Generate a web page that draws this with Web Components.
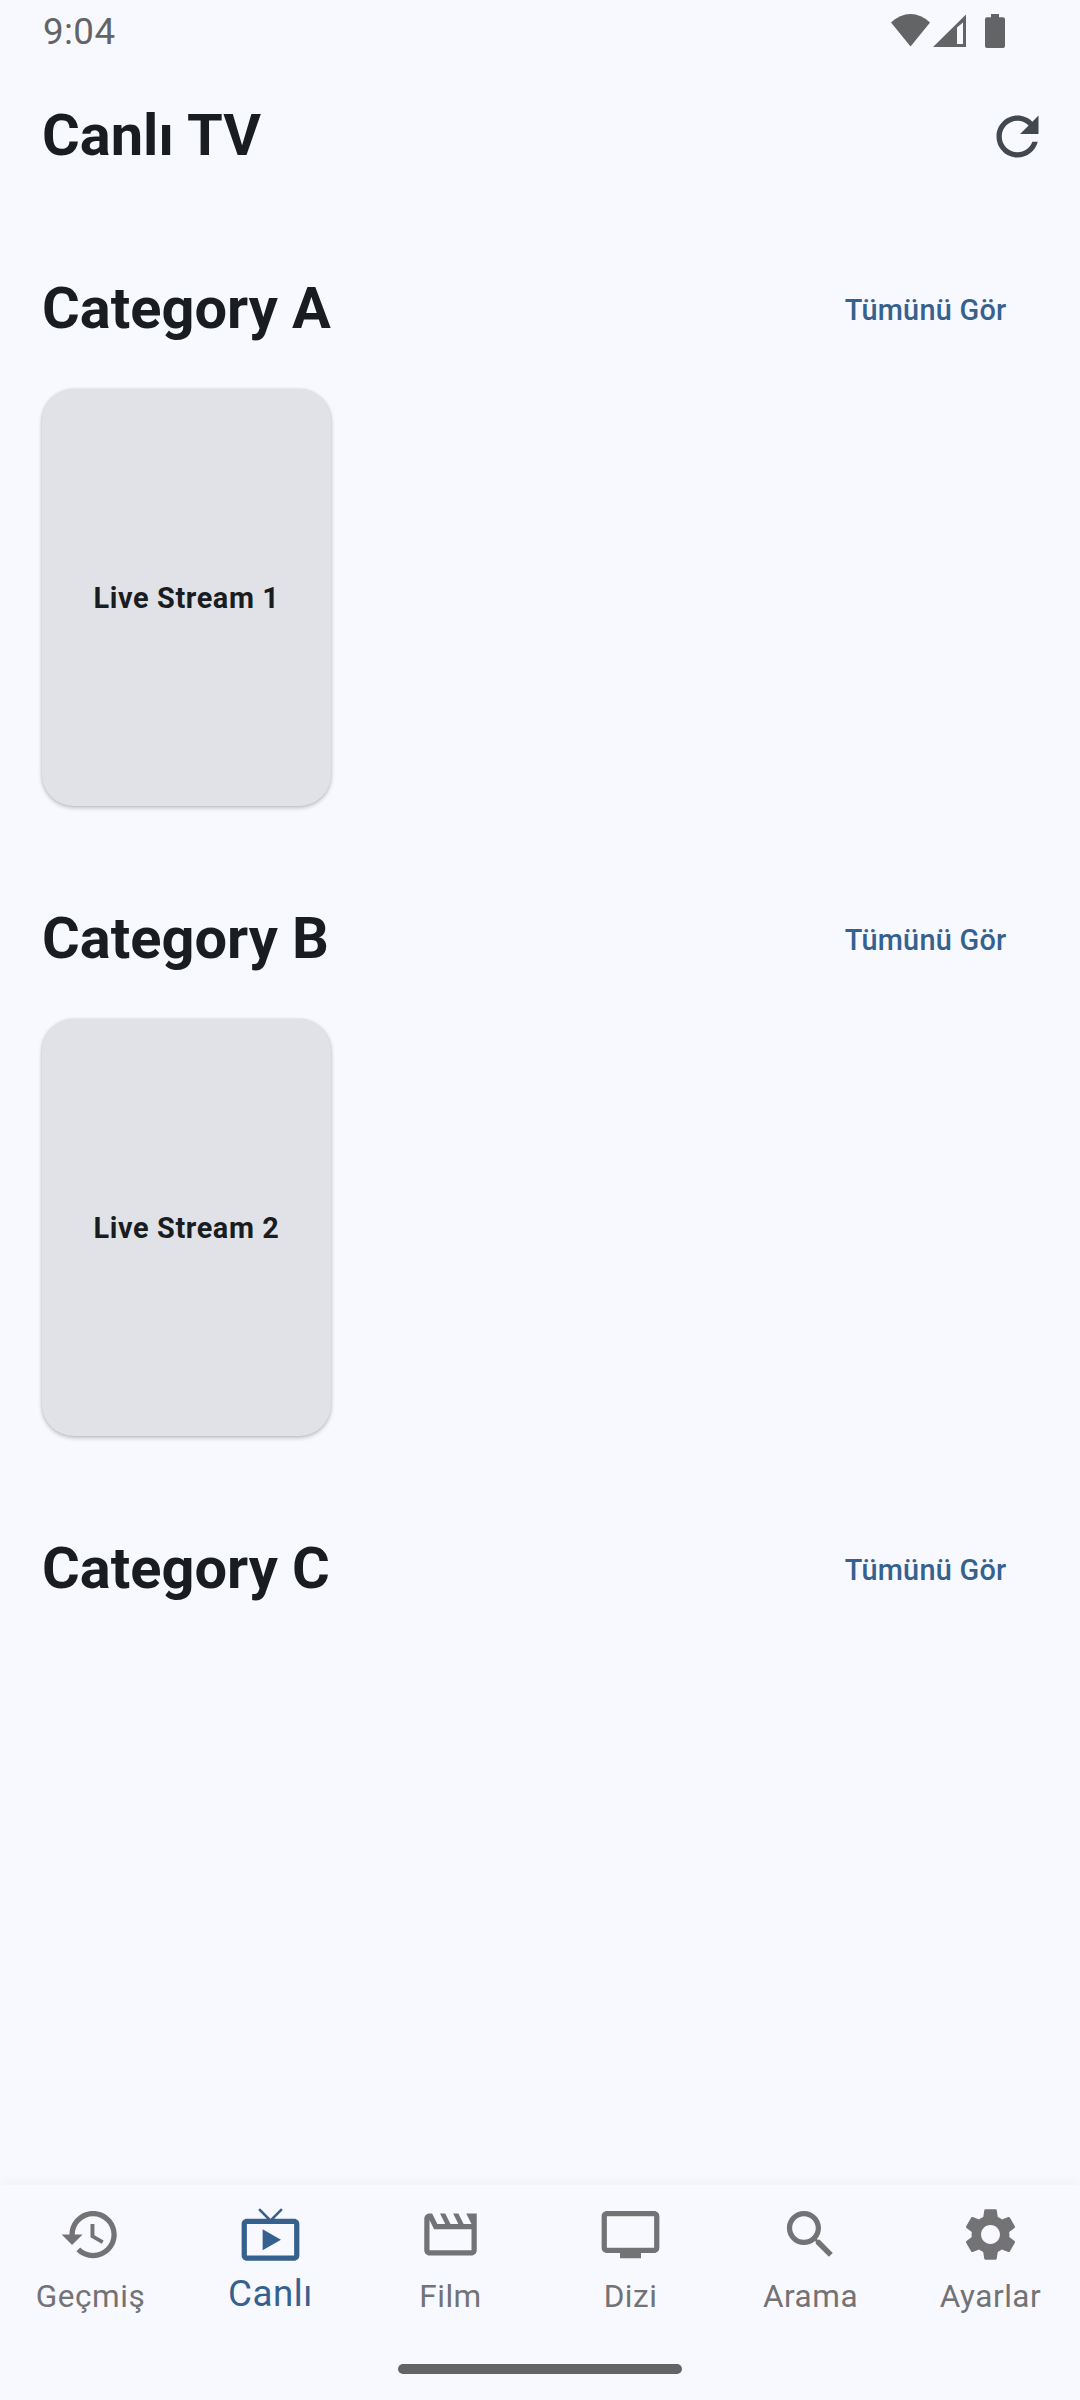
<!DOCTYPE html>
<html lang="tr">
<head>
<meta charset="utf-8">
<title>Canlı TV</title>
<style>
html,body{margin:0;background:#f8f9ff}
body{font-family:Roboto,"Liberation Sans",sans-serif;color:#191c20}
</style>
</head>
<body>
<tv-app></tv-app>
<script>
const define = (name, html, setup) => customElements.define(name, class extends HTMLElement {
  constructor() {
    super();
    this.attachShadow({ mode: "open" });
  }
  connectedCallback() {
    this.shadowRoot.innerHTML = html;
    if (setup) setup(this, this.shadowRoot);
  }
});

const ICONS = {
  refresh: "M17.65 6.35C16.2 4.9 14.21 4 12 4c-4.42 0-7.99 3.58-7.99 8s3.57 8 7.99 8c3.73 0 6.84-2.55 7.73-6h-2.08c-.82 2.33-3.04 4-5.65 4-3.31 0-6-2.69-6-6s2.69-6 6-6c1.66 0 3.14.69 4.22 1.78L13 11h7V4l-2.35 2.35z",
  history: "M13 3c-4.97 0-9 4.03-9 9H1l3.89 3.89.07.14L9 12H6c0-3.87 3.13-7 7-7s7 3.13 7 7-3.13 7-7 7c-1.93 0-3.68-.79-4.94-2.06l-1.42 1.42C8.27 19.99 10.51 21 13 21c4.97 0 9-4.03 9-9s-4.03-9-9-9zm-1 5v5l4.28 2.54.72-1.21-3.5-2.08V8H12z",
  live: "M21 6h-7.59l3.29-3.29L16 2l-4 4-4-4-.71.71L10.59 6H3c-1.1 0-2 .89-2 2v12c0 1.1.9 2 2 2h18c1.1 0 2-.9 2-2V8c0-1.11-.9-2-2-2zm0 14H3V8h18v12zM9 10v8l7-4z",
  movie: "M4 6.47L5.76 10H20v8H4V6.47M22 4h-4l2 4h-3l-2-4h-2l2 4h-3l-2-4H8l2 4H7L5 4H4c-1.1 0-1.99.9-1.99 2L2 18c0 1.1.9 2 2 2h16c1.1 0 2-.9 2-2V4z",
  tv: "M21 3H3c-1.1 0-2 .9-2 2v12c0 1.1.9 2 2 2h5v2h8v-2h5c1.1 0 1.99-.9 1.99-2L23 5c0-1.1-.9-2-2-2zm0 14H3V5h18v12z",
  search: "M15.5 14h-.79l-.28-.27C15.41 12.59 16 11.11 16 9.5 16 5.91 13.09 3 9.5 3S3 5.91 3 9.5 5.91 16 9.5 16c1.61 0 3.09-.59 4.23-1.57l.27.28v.79l5 4.99L20.49 19l-4.99-5zm-6 0C7.01 14 5 11.99 5 9.5S7.01 5 9.5 5 14 7.01 14 9.5 11.99 14 9.5 14z",
  settings: "M19.14 12.94c.04-.3.06-.61.06-.94 0-.32-.02-.64-.07-.94l2.03-1.58c.18-.14.23-.41.12-.61l-1.92-3.32c-.12-.22-.37-.29-.59-.22l-2.39.96c-.5-.38-1.03-.7-1.62-.94l-.36-2.54c-.04-.24-.24-.41-.48-.41h-3.84c-.24 0-.43.17-.47.41l-.36 2.54c-.59.24-1.13.57-1.62.94l-2.39-.96c-.22-.08-.47 0-.59.22L2.74 8.87c-.12.21-.08.47.12.61l2.03 1.58c-.05.3-.09.63-.09.94s.02.64.07.94l-2.03 1.58c-.18.14-.23.41-.12.61l1.92 3.32c.12.22.37.29.59.22l2.39-.96c.5.38 1.03.7 1.62.94l.36 2.54c.05.24.24.41.48.41h3.84c.24 0 .44-.17.47-.41l.36-2.54c.59-.24 1.13-.56 1.62-.94l2.39.96c.22.08.47 0 .59-.22l1.92-3.32c.12-.22.07-.47-.12-.61l-2.01-1.58zM12 15.6c-1.98 0-3.6-1.62-3.6-3.6s1.62-3.6 3.6-3.6 3.6 1.62 3.6 3.6-1.62 3.6-3.6 3.6z"
};

define("md-icon", `<style>:host{display:block;width:63px;height:63px}svg{display:block;width:100%;height:100%;fill:currentColor}</style>
<svg viewBox="0 0 24 24"><path/></svg>`,
  (el, root) => root.querySelector("path").setAttribute("d", ICONS[el.getAttribute("name")]));

define("status-bar", `<style>
:host{display:flex;justify-content:space-between;height:63px;padding:0 75px 0 43px;box-sizing:border-box;color:#636466;font-size:36.75px;letter-spacing:.4px}
span{line-height:63px}
svg{display:block;fill:currentColor}
</style>
<span>9:04</span>
<svg width="114" height="63" viewBox="891 0 114 63">
<path d="M891 22.5Q900 14 910.5 14T930 22.5L910.5 46.5Z"/>
<path fill-rule="evenodd" d="M933 47L966 14.5V47ZM957 27.5V44H963V22.5Z"/>
<path d="M991 14h8v3.3h4q2 0 2 2V46q0 2-2 2H987q-2 0-2-2V19.3q0-2 2-2h4Z"/>
</svg>`);

define("app-header", `<style>
:host{display:flex;justify-content:space-between;align-items:center;height:147px;padding:0 31.5px 0 42px;box-sizing:border-box}
h1{margin:0 0 4px;font-size:57.75px;line-height:74px;font-weight:700}
md-icon{color:#43474e}
</style>
<h1><slot></slot></h1><md-icon name="refresh"></md-icon>`);

define("stream-card", `<style>
:host{display:flex;align-items:center;justify-content:center;width:289px;height:417px;margin-left:42px;border-radius:31.5px;background:#e1e2e7;box-sizing:border-box;
box-shadow:0 2px 4px rgba(0,0,0,.22),0 0 3px rgba(0,0,0,.1);font-size:28.875px;line-height:42px;font-weight:700;letter-spacing:.6px}
</style><span><slot></slot></span>`);

define("category-row", `<style>
:host{display:block;height:630px}
header{display:flex;justify-content:space-between;align-items:center;height:179px;padding:18px 73.5px 0 42px;box-sizing:border-box}
h2{margin:0 0 2px;font-size:57.75px;line-height:74px;font-weight:700}
a{margin-top:2px;color:#36618e;font-size:28.875px;line-height:42px;font-weight:500;letter-spacing:.26px}
</style>
<header><h2></h2><a>Tümünü Gör</a></header><slot></slot>`,
  (el, root) => root.querySelector("h2").textContent = el.getAttribute("label"));

define("nav-item", `<style>
:host{flex:1;display:flex;flex-direction:column;align-items:center;padding-top:18.2px;color:#737375}
:host([active]){color:#36618e}
span{margin-top:9px;padding-left:1px;font-size:31.5px;line-height:44px;letter-spacing:.53px}
:host([active]) span{font-size:36.75px;margin-top:6px}
</style>
<md-icon></md-icon><span><slot></slot></span>`,
  (el, root) => {
    const icon = document.createElement("md-icon");
    icon.setAttribute("name", el.getAttribute("icon"));
    root.querySelector("md-icon").replaceWith(icon);
  });

define("bottom-nav", `<style>
:host{display:flex;flex-direction:column;height:215.3px;background:#f8f9ff;box-shadow:0 -1px 12px rgba(0,0,0,.045)}
nav{display:flex;flex:1}
i{width:284px;height:10px;border-radius:5px;background:#636565;margin:0 auto 26px}
</style>
<nav>
<nav-item icon="history">Geçmiş</nav-item>
<nav-item icon="live" active>Canlı</nav-item>
<nav-item icon="movie">Film</nav-item>
<nav-item icon="tv">Dizi</nav-item>
<nav-item icon="search">Arama</nav-item>
<nav-item icon="settings">Ayarlar</nav-item>
</nav><i></i>`);

define("tv-app", `<style>
:host{display:flex;flex-direction:column;width:1080px;height:2400px;overflow:hidden;background:#f8f9ff}
main{flex:1;min-height:0}
</style>
<status-bar></status-bar>
<app-header>Canlı TV</app-header>
<main>
<category-row label="Category A"><stream-card>Live Stream 1</stream-card></category-row>
<category-row label="Category B"><stream-card>Live Stream 2</stream-card></category-row>
<category-row label="Category C"></category-row>
</main>
<bottom-nav></bottom-nav>`);
</script>
</body>
</html>
